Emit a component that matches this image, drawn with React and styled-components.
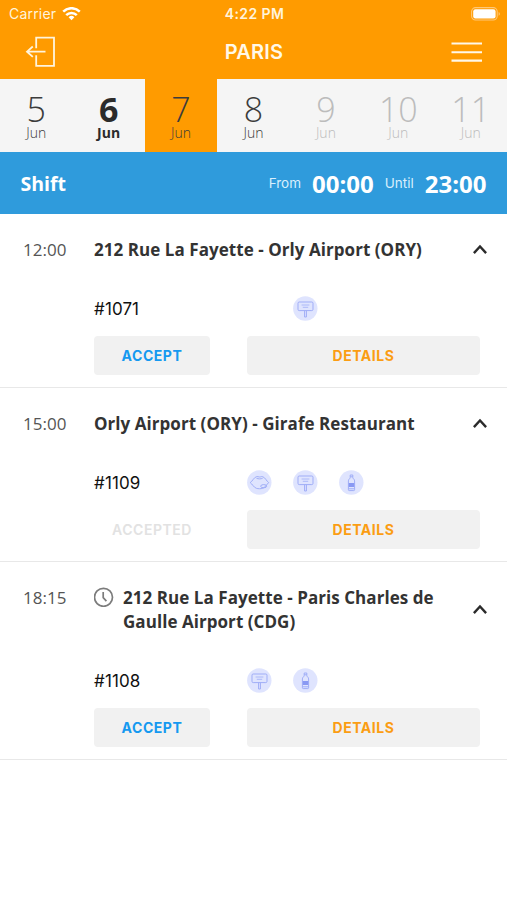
import React, { useState } from 'react';
import styled, { createGlobalStyle } from 'styled-components';

const DAYS = [
  { day: 5, month: 'Jun' },
  { day: 6, month: 'Jun', bold: true },
  { day: 7, month: 'Jun' },
  { day: 8, month: 'Jun' },
  { day: 9, month: 'Jun', disabled: true },
  { day: 10, month: 'Jun', disabled: true },
  { day: 11, month: 'Jun', disabled: true }
];

const RIDES = [
  { id: 1071, time: '12:00', title: '212 Rue La Fayette - Orly Airport (ORY)', options: [null, 'sign'] },
  { id: 1109, time: '15:00', title: 'Orly Airport (ORY) - Girafe Restaurant', options: ['mask', 'sign', 'bottle'], accepted: true },
  { id: 1108, time: '18:15', title: '212 Rue La Fayette - Paris Charles de Gaulle Airport (CDG)', options: ['sign', 'bottle'], delayed: true }
];

const WifiIcon = () => (
  <svg width="19" height="14" viewBox="0 0 19 14" fill="none" stroke="#fff" strokeWidth="2.5">
    <path d="M1.2 4.600a11.8 11.8 0 0 1 16.6 0" />
    <path d="M4.2 8.100a7.5 7.5 0 0 1 10.6 0" />
    <path d="M9.5 13.200L6.6 10.300a4.1 4.1 0 0 1 5.8 0z" fill="#fff" stroke="none" />
  </svg>
);

const BatteryIcon = () => (
  <svg width="30" height="14" viewBox="0 0 30 14">
    <rect x="0.6" y="0.6" width="25.6" height="12.4" rx="4" fill="none" stroke="#ffc878" strokeWidth="1.1" />
    <rect x="2.2" y="2.2" width="22.4" height="9.2" rx="2.2" fill="#fff" />
    <path d="M27.6 4.9c1.7.6 1.7 3.2 0 3.8z" fill="#ffc878" />
  </svg>
);

const ExitIcon = () => (
  <svg width="31" height="32" viewBox="0 0 31 32" fill="none" stroke="#fff4dc" strokeWidth="1.8">
    <path d="M11.2 12.2V1.700h17.800v28.200H11.200V19.200" />
    <path d="M20.500 15.700H1.700M7.800 10.500L2 15.700l5.800 5.200" />
  </svg>
);

const MenuIcon = () => (
  <svg width="31" height="22" viewBox="0 0 31 22" stroke="#fff8e8" strokeWidth="2.1">
    <path d="M.5 2.500h30.500M.5 11.200h30.500M.5 19.600h30.500" />
  </svg>
);

const ClockIcon = () => (
  <ClockSvg width="20" height="20" viewBox="0 0 20 20" fill="none" stroke="#7c7c7c" strokeWidth="1.7">
    <circle cx="9.500" cy="10.300" r="9" />
    <path d="M9.200 4.900v5.800l3.200 3.400" />
  </ClockSvg>
);

const ChevronIcon = () => (
  <svg width="16" height="12" viewBox="0 0 16 12" fill="none" stroke="#2b2b2b" strokeWidth="2.4">
    <path d="M1.900 9.100L8 2.500l6.100 6.600" />
  </svg>
);

const OPTION_SHAPES = {
  sign: (
    <>
      <rect x="5" y="6" width="15" height="8.6" rx="1.2" />
      <path d="M8.6 9h7.8M9.8 11.3h5.4" strokeWidth="0.8" />
      <path d="M11.6 14.6v6.4h1.8v-6.4" />
    </>
  ),
  mask: (
    <>
      <path d="M3.200 12.600c2.200-1.200 3.600-5.200 6.400-6 1.200-.3 1.800.4 3 .4s1.900-.7 3.100-.3c2.700.9 3.800 4.500 6 5.900-1.900 1.600-3.300 4.800-6 5.700-2 .6-4.400.6-6.300 0-2.700-.9-4-4.200-6.200-5.700z" />
      <path d="M9.400 8.200c1.900.9 4.400.9 6.300 0" />
      <ellipse cx="16.700" cy="16.200" rx="3" ry="1.600" />
    </>
  ),
  bottle: (
    <>
      <path d="M11.200 5h2.600v2.500c0 1.200 1.800 1.600 1.800 3.400v8.900c0 .5-.3.8-.8.8h-4.600c-.5 0-.8-.3-.8-.8v-8.900c0-1.800 1.800-2.200 1.800-3.400z" />
      <path d="M11.200 6.800h2.600" />
      <rect x="9.800" y="13" width="5.400" height="4" fill="#8999f3" stroke="none" />
      <path d="M9.600 18.800h5.800" />
    </>
  )
};

const OptionIcon = ({ type }) => (
  <svg width="25" height="25" viewBox="0 0 25 25" fill="none" stroke="#9fadf7" strokeWidth="1">
    <circle cx="12.300" cy="12.500" r="12.200" fill="#dfe4fe" stroke="none" />
    {OPTION_SHAPES[type]}
  </svg>
);

const Ride = ({ ride }) => {
  const { id, time, title, options, accepted, delayed } = ride;

  return (
    <RideWrapper>
      <Time>{time}</Time>
      <RideHeader>
        {delayed && <ClockIcon />}
        <Title $delayed={delayed}>{title}</Title>
        <Toggle aria-label="Collapse"><ChevronIcon /></Toggle>
      </RideHeader>
      <RideBody>
        <RideNumber>#{id}</RideNumber>
        <Options>
          {options.map((o, i) => (
            <OptionSlot key={i}>{o && <OptionIcon type={o} />}</OptionSlot>
          ))}
        </Options>
        <Button $color={accepted ? '#e2e2e2' : '#1599f0'} $flat={accepted} disabled={accepted}>
          {accepted ? 'ACCEPTED' : 'ACCEPT'}
        </Button>
        <Button $color="#fb9d13">DETAILS</Button>
      </RideBody>
    </RideWrapper>
  );
};

const App = () => {
  const [selected, setSelected] = useState(7);

  return (
    <Page>
      <GlobalStyle />
      <StatusBar>
        <Carrier>Carrier <WifiIcon /></Carrier>
        <Clock>4:22 PM</Clock>
        <Battery><BatteryIcon /></Battery>
      </StatusBar>
      <NavBar>
        <ExitIcon />
        <City>PARIS</City>
        <MenuIcon />
      </NavBar>
      <DaysWrapper>
        {DAYS.map(d => (
          <Day
            key={d.day}
            $selected={d.day === selected}
            $bold={d.bold}
            $disabled={d.disabled}
            onClick={() => !d.disabled && setSelected(d.day)}
          >
            <DayNumber $bold={d.bold}>{d.day}</DayNumber>
            <Month $bold={d.bold}>{d.month}</Month>
          </Day>
        ))}
      </DaysWrapper>
      <ShiftBar>
        <ShiftLabel>Shift</ShiftLabel>
        <ShiftHint>From</ShiftHint>
        <ShiftTime>00:00</ShiftTime>
        <ShiftHint>Until</ShiftHint>
        <ShiftTime>23:00</ShiftTime>
      </ShiftBar>
      {RIDES.map(r => <Ride key={r.id} ride={r} />)}
    </Page>
  );
};

const GlobalStyle = createGlobalStyle`
  body {
    margin: 0;
    background: #fff;
  }

  * {
    box-sizing: border-box;
  }

  svg {
    display: block;
    flex: none;
  }
`;

const ClockSvg = styled.svg`
  margin-top: 1px;
`;

const Page = styled.div`
  width: 507px;
  height: 900px;
  overflow: hidden;
  background: #fff;
  font-family: 'Open Sans', sans-serif;
  color: #333;
`;

const StatusBar = styled.div`
  display: grid;
  grid-template-columns: 1fr auto 1fr;
  align-items: center;
  height: 27px;
  padding: 0 6px 0 9px;
  background: #ff9b00;
  color: #fff4dc;
  font-family: Inter, sans-serif;
  font-size: 14px;
`;

const Carrier = styled.div`
  display: flex;
  align-items: center;
  gap: 6px;
  letter-spacing: 0.2px;
`;

const Clock = styled.div`
  margin-right: 1px;
  font-weight: 600;
  font-size: 14px;
  letter-spacing: 0.4px;
`;

const Battery = styled.div`
  display: flex;
  justify-content: flex-end;
`;

const NavBar = styled.div`
  display: flex;
  align-items: center;
  justify-content: space-between;
  height: 52px;
  padding: 0 25px 2px;
  background: #ff9b00;
`;

const City = styled.div`
  padding-left: 1px;
  font-family: Inter, sans-serif;
  font-weight: 600;
  font-size: 20px;
  letter-spacing: 0.2px;
  color: #fff8e8;
`;

const DaysWrapper = styled.div`
  display: grid;
  grid-template-columns: repeat(7, 1fr);
  height: 73px;
  background: #f5f5f5;
`;

const Day = styled.div`
  display: flex;
  flex-direction: column;
  align-items: center;
  padding-top: 13px;
  background: ${p => p.$selected ? '#ff9b00' : 'transparent'};
  color: ${p => p.$disabled ? '#bcbcbc' : p.$bold ? '#2b2b2b' : '#3c3c3c'};
`;

const DayNumber = styled.div`
  font-size: 34px;
  line-height: 34px;
  font-weight: ${p => p.$bold ? 700 : 300};
`;

const Month = styled.div`
  font-size: 14px;
  line-height: 14px;
  font-weight: ${p => p.$bold ? 700 : 300};
`;

const ShiftBar = styled.div`
  display: flex;
  align-items: center;
  height: 62px;
  padding: 0 20.5px;
  background: #2f9bdc;
  color: #fff;
`;

const ShiftLabel = styled.div`
  flex: 1;
  font-size: 19.5px;
  font-weight: 700;
`;

const ShiftHint = styled.div`
  margin: 0 11px;
  font-family: Inter, sans-serif;
  font-size: 13.5px;
  color: #d9effc;
`;

const ShiftTime = styled.div`
  font-size: 24px;
  font-weight: 700;
`;

const RideWrapper = styled.div`
  display: grid;
  grid-template-columns: 71px 386px;
  padding: 24px 27px 12px 23px;
  border-bottom: 1px solid #e8e8e8;
`;

const Time = styled.div`
  font-size: 17px;
  line-height: 24px;
  color: #555;
`;

const RideHeader = styled.div`
  display: flex;
`;

const Title = styled.div`
  flex: 1;
  margin-left: ${p => p.$delayed ? 9 : 0}px;
  padding-right: 20px;
  font-size: 17px;
  line-height: 24px;
  font-weight: 700;
  letter-spacing: 0.05px;
`;

const Toggle = styled.button`
  display: flex;
  align-items: center;
  margin-right: -8px;
  padding: 0;
  border: 0;
  background: none;
`;

const RideBody = styled.div`
  grid-column: 2;
  display: grid;
  grid-template-columns: 116px 233px;
  column-gap: 37px;
  row-gap: 15px;
  align-items: center;
  margin-top: 34px;
`;

const RideNumber = styled.div`
  font-family: Inter, sans-serif;
  font-size: 17px;
  letter-spacing: 0.1px;
  color: #111;
`;

const Options = styled.div`
  display: flex;
  gap: 21px;
`;

const OptionSlot = styled.div`
  width: 25px;
  height: 25px;
`;

const Button = styled.button`
  height: 39px;
  padding: 0;
  border: 0;
  border-radius: 4px;
  background: ${p => p.$flat ? 'transparent' : '#f1f1f1'};
  color: ${p => p.$color};
  font-family: Inter, sans-serif;
  font-size: 14px;
  font-weight: ${p => p.$flat ? 600 : 700};
  letter-spacing: 0.55px;
`;

export default App;
